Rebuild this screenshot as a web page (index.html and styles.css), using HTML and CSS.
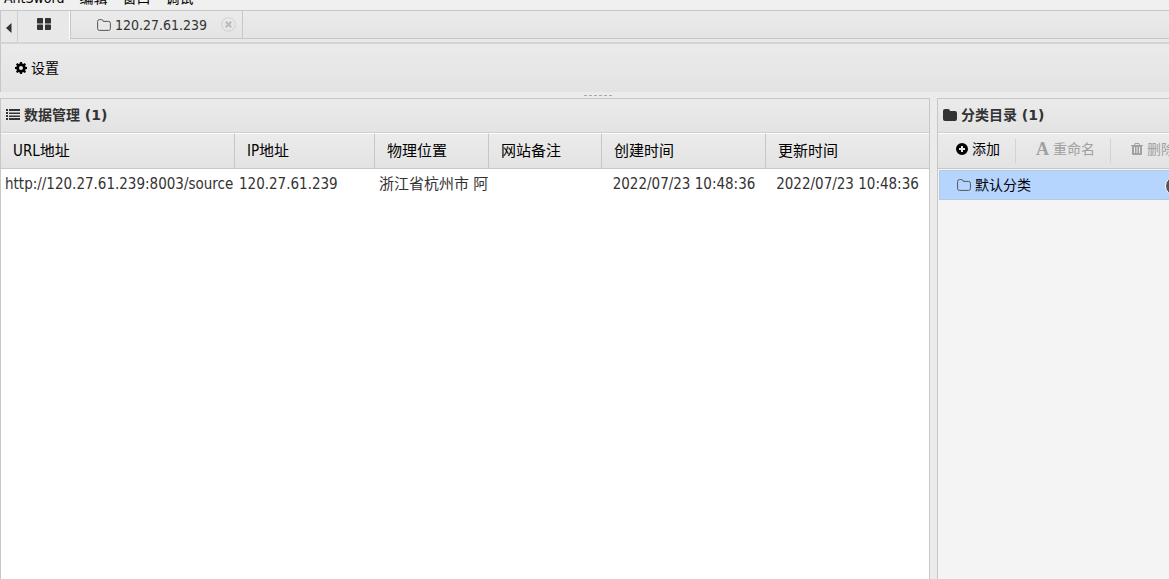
FILE: index.html
```html
<!DOCTYPE html>
<html lang="zh-CN">
<head>
    <meta charset="utf-8">
    <title>AntSword</title>
    <link rel="stylesheet" href="styles.css">
</head>
<body>
    <nav class="menubar">
        <span>AntSword</span>
        <span>编辑</span>
        <span>窗口</span>
        <span>调试</span>
    </nav>

    <div class="tabbar">
        <button class="tab-arrow" aria-label="向左">
            <svg width="6" height="10" viewBox="0 0 6 10"><path d="M5.500 0v10L0 5z"/></svg>
        </button>
        <div class="tabs">
            <button class="tab-home" aria-label="主页">
                <svg width="14" height="12" viewBox="0 0 14 12"><path d="M1 0h4.500q.5 0 .5.500v4.500q0 .5-.5.500H1q-1 0-1-.5V1q0-1 1-1zM8.500 0H13q1 0 1 1v4q0 .5-1 .5H8.500Q8 5.500 8 5V.5Q8 0 8.500 0zM1 6.500h4.500q.5 0 .5.500v4.500q0 .5-.5.500H1q-1 0-1-1V7q0-.5 1-.5zM8.500 6.500H13q1 0 1 .5v4q0 1-1 1H8.500q-.5 0-.5-.5V7q0-.5.5-.5z"/></svg>
            </button>
            <div class="tab">
                <svg class="folder-open" width="14" height="12" viewBox="0 0 14 12"><path d="M.6 9.500v-7Q.6.600 2.500.600h2Q6.200.600 6.200 2.400h5.300q1.900 0 1.900 1.900v5.200q0 1.900-1.900 1.900h-9Q.6 11.400.6 9.500z"/></svg>
                <span>120.27.61.239</span>
                <button class="tab-close" aria-label="关闭">
                    <svg width="15" height="15" viewBox="0 0 15 15"><circle cx="7.500" cy="7.500" r="6.800"/><path d="M4.800 4.800l5.400 5.400M10.200 4.800l-5.400 5.400"/></svg>
                </button>
            </div>
        </div>
    </div>

    <div class="ribbon">
        <button class="tool">
            <svg width="12" height="12" viewBox="0 0 12 12"><path fill-rule="evenodd" d="M5 0h2l.3 1.600 1 .4 1.400-.9 1.300 1.300-.9 1.400.4 1L12 5v2l-1.500.300-.4 1 .9 1.400-1.300 1.300-1.400-.9-1 .4L7 12H5l-.3-1.500-1-.4-1.400.9L1 9.700l.9-1.400-.4-1L0 7V5l1.500-.2.400-1L1 2.400l1.300-1.300 1.400.9 1-.4zM6 4a2 2 0 1 0 0 4 2 2 0 0 0 0-4z"/></svg>
            设置
        </button>
    </div>
    <div class="splitter"></div>

    <div class="main">
        <section class="panel data">
            <h2 class="panel-title">
                <svg width="14" height="11" viewBox="0 0 14 11"><path d="M0 0h2v2H0zM3 0h11v2H3zM0 3h2v2H0zM3 3.500h11V5H3zM0 6h2v2H0zM3 6.500h11V8H3zM0 9h2v2H0zM3 9h11v2H3z"/></svg>
                数据管理 (1)
            </h2>
            <table class="grid">
                <colgroup>
                    <col class="col-url">
                    <col class="col-ip">
                    <col class="col-addr">
                    <col class="col-note">
                    <col class="col-time">
                    <col>
                </colgroup>
                <thead>
                    <tr>
                        <th>URL地址</th>
                        <th>IP地址</th>
                        <th>物理位置</th>
                        <th>网站备注</th>
                        <th>创建时间</th>
                        <th>更新时间</th>
                    </tr>
                </thead>
                <tbody>
                    <tr>
                        <td>http://120.27.61.239:8003/source</td>
                        <td>120.27.61.239</td>
                        <td>浙江省杭州市 阿</td>
                        <td></td>
                        <td class="time">2022/07/23 10:48:36</td>
                        <td class="time">2022/07/23 10:48:36</td>
                    </tr>
                </tbody>
            </table>
        </section>

        <aside class="panel category">
            <h2 class="panel-title">
                <svg width="14" height="12" viewBox="0 0 14 12"><path d="M0 10V2Q0 0 2 0h3q2 0 2 2h5q2 0 2 2v6q0 2-2 2H2q-2 0-2-2z"/></svg>
                分类目录 (1)
            </h2>
            <div class="toolbar">
                <button class="tool">
                    <svg width="12" height="12" viewBox="0 0 12 12"><path fill-rule="evenodd" d="M6 0a6 6 0 1 0 0 12A6 6 0 0 0 6 0zM5 3h2v2h2v2H7v2H5V7H3V5h2z"/></svg>
                    添加
                </button>
                <button class="tool" disabled>
                    <span class="letter" aria-hidden="true">A</span>
                    重命名
                </button>
                <button class="tool" disabled>
                    <svg width="12" height="12" viewBox="0 0 12 12"><path fill-rule="evenodd" d="M4 0h4l1 2h3v1h-1v8q0 1-1 1H2q-1 0-1-1V3H0V2h3zM4.500 1L4 2h4l-.5-1zM3 4v6h1V4zM5.500 4v6h1V4zM8 4v6h1V4z"/></svg>
                    删除
                </button>
            </div>
            <ul class="tree">
                <li class="selected">
                    <svg class="folder-open" width="14" height="12" viewBox="0 0 14 12"><path d="M.6 9.500v-7Q.6.600 2.500.600h2Q6.200.600 6.200 2.400h5.300q1.900 0 1.900 1.900v5.200q0 1.900-1.900 1.900h-9Q.6 11.400.6 9.500z"/></svg>
                    默认分类
                    <span class="badge"></span>
                </li>
            </ul>
        </aside>
    </div>
</body>
</html>
```

FILE: styles.css
```css
* {
    box-sizing: border-box;
}

body {
    display: flex;
    flex-direction: column;
    height: 100vh;
    margin: 0;
    overflow: hidden;
    background-color: #ebebeb;
    color: #333;
    font-family: "DejaVu Sans Condensed", "Noto Sans CJK SC", sans-serif;
    font-size: 14px;
    line-height: 20px;
    white-space: nowrap;
}

button {
    display: flex;
    align-items: center;
    padding: 0;
    border: none;
    background: none;
    color: #000;
    font: inherit;
}

svg {
    flex: none;
    fill: currentColor;
}

.menubar {
    display: flex;
    align-items: flex-end;
    gap: 15px;
    flex: none;
    height: 10px;
    padding: 0 4px 2px;
    overflow: hidden;
    background-color: #f0f0f0;
    color: #000;
}

.tabbar {
    display: flex;
    flex: none;
    height: 34px;
    border-top: 1px solid #c7c7c7;
    border-bottom: 2px solid #d4d4d4;
    border-left: 1px solid #c7c7c7;
    background-color: #e8e8e8;
}

.tab-arrow {
    justify-content: center;
    width: 17px;
    padding-top: 2px;
    border-right: 1px solid #d0d0d0;
    color: #333;
}

.tabs {
    display: flex;
    flex: 1;
    height: 28px;
}

.tabs::after {
    content: "";
    flex: 1;
    border-bottom: 1px solid #c7c7c7;
    background: linear-gradient(#ebebeb, #e4e4e4);
}

.tab-home {
    justify-content: center;
    width: 52px;
    padding-bottom: 2px;
    border-right: 1px solid #fff;
    color: #333;
}

.tab {
    display: flex;
    align-items: center;
    gap: 4px;
    width: 173px;
    padding-left: 26px;
    border: solid #c7c7c7;
    border-width: 0 1px 1px;
    background: linear-gradient(#ebebeb, #e4e4e4);
}

.folder-open {
    fill: none;
    stroke: #555;
}

.tab-close {
    margin-left: 10px;
}

.tab-close svg {
    fill: none;
    stroke: #d0d0d0;
}

.tab-close path {
    stroke: #bbb;
    stroke-width: 2;
}

.ribbon {
    display: flex;
    flex: none;
    height: 48px;
    padding-left: 14px;
    border-left: 1px solid #c7c7c7;
    background: linear-gradient(#ebebeb, #e3e3e3);
}

.tool {
    gap: 4px;
}

.splitter {
    display: flex;
    align-items: center;
    justify-content: center;
    flex: none;
    height: 6px;
    padding-left: 26px;
}

.splitter::after {
    content: "";
    width: 28px;
    border-top: 1px dashed #aaa;
}

.main {
    display: flex;
    flex: 1;
    gap: 7px;
    min-height: 0;
}

.panel {
    display: flex;
    flex-direction: column;
    border: 1px solid #c7c7c7;
    border-bottom: none;
}

.data {
    flex: 1;
    min-width: 0;
    background-color: #fff;
}

.category {
    flex: none;
    width: 232px;
    border-right: none;
    overflow: hidden;
    background-color: #f4f4f4;
}

.panel-title {
    display: flex;
    align-items: center;
    gap: 4px;
    flex: none;
    height: 34px;
    margin: 0;
    padding: 0 0 2px 5px;
    border-bottom: 1px solid #d0d0d0;
    background: linear-gradient(#ebebeb, #e3e3e3);
    font-family: "DejaVu Sans", "Noto Sans CJK SC", sans-serif;
    font-size: 14px;
    font-weight: bold;
}

.grid {
    width: 100%;
    table-layout: fixed;
    border-collapse: separate;
    border-spacing: 0;
    font-size: 15px;
}

.col-url {
    width: 234px;
}

.col-ip {
    width: 140px;
}

.col-addr {
    width: 114px;
}

.col-note {
    width: 113px;
}

.col-time {
    width: 164px;
}

.grid th {
    height: 36px;
    padding: 0 12px;
    border-top: 1px solid #fff;
    border-right: 1px solid #c7c7c7;
    border-bottom: 1px solid #c7c7c7;
    background: linear-gradient(#ebebeb, #e3e3e3);
    color: #000;
    font-weight: normal;
    text-align: left;
}

.grid th:last-child {
    border-right: none;
}

.grid td {
    height: 30px;
    padding: 0 0 0 4px;
}

.grid .time {
    padding: 0;
    text-align: center;
}

.toolbar {
    display: flex;
    align-items: center;
    flex: none;
    height: 36px;
    border-top: 1px solid #fff;
    border-bottom: 1px solid #c7c7c7;
    background: linear-gradient(#ebebeb, #e3e3e3);
}

.toolbar .tool {
    flex: none;
    height: 24px;
    padding: 0 15px 4px 20px;
    border-right: 1px solid #ccd6da;
}

.toolbar .tool:first-child {
    padding-left: 18px;
}

.toolbar .tool:disabled {
    color: #a0a0a0;
}

.letter {
    font-family: "Liberation Serif", serif;
    font-size: 18px;
    font-weight: bold;
}

.tree {
    margin: 0;
    padding: 1px 0 0 1px;
    list-style: none;
}

.tree li {
    display: flex;
    align-items: center;
    gap: 4px;
    position: relative;
    height: 30px;
    padding-left: 17px;
    border: 1px solid #b5c9e2;
    border-right: none;
    color: #000;
}

.tree .selected {
    background-color: #b5d5ff;
}

.badge {
    position: absolute;
    top: 5px;
    right: -16px;
    width: 20px;
    height: 20px;
    border: 1px solid #fff;
    border-radius: 10px;
    background-color: #555;
}
```
